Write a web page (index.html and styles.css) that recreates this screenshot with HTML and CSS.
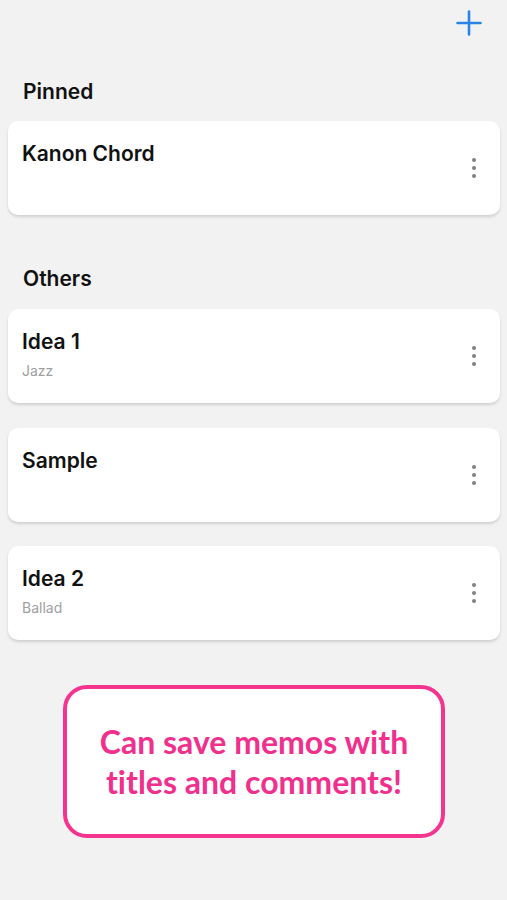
FILE: index.html
```html
<!DOCTYPE html>
<html lang="en">
<head>
    <meta charset="UTF-8">
    <meta name="viewport" content="width=device-width, initial-scale=1.0">
    <title>Chord Memos</title>
    <link rel="stylesheet" href="styles.css">
</head>
<body>
    <div id="app">
        <div class="top-bar">
            <button class="add-button" aria-label="Add memo">
                <svg width="26" height="26" viewBox="0 0 26 26">
                    <path d="M13 1.5v23M1.5 13h23" stroke="#2a84e6" stroke-width="2.6" stroke-linecap="round" fill="none"/>
                </svg>
            </button>
        </div>

        <h3 class="section-title pinned">Pinned</h3>
        <div class="memo-list">
            <div class="memo-card">
                <div class="memo-text">
                    <div class="memo-title">Kanon Chord</div>
                </div>
                <div class="more-dots"><span></span><span></span><span></span></div>
            </div>
        </div>

        <h3 class="section-title others">Others</h3>
        <div class="memo-list">
            <div class="memo-card">
                <div class="memo-text">
                    <div class="memo-title">Idea 1</div>
                    <div class="memo-comment">Jazz</div>
                </div>
                <div class="more-dots"><span></span><span></span><span></span></div>
            </div>
            <div class="memo-card">
                <div class="memo-text">
                    <div class="memo-title">Sample</div>
                </div>
                <div class="more-dots"><span></span><span></span><span></span></div>
            </div>
            <div class="memo-card">
                <div class="memo-text">
                    <div class="memo-title">Idea 2</div>
                    <div class="memo-comment">Ballad</div>
                </div>
                <div class="more-dots"><span></span><span></span><span></span></div>
            </div>
        </div>

        <div class="callout">
            <p>Can save memos with<br>titles and comments!</p>
        </div>
    </div>
</body>
</html>
```

FILE: styles.css
```css
body {
    background-color: #f2f2f2;
    font-family: Inter, "Noto Sans", sans-serif;
    margin: 0;
    padding: 0;
    color: #111111;
}

#app {
    width: 507px;
    height: 900px;
}

.top-bar {
    height: 46px;
    display: flex;
    justify-content: flex-end;
    align-items: center;
    padding-right: 25px;
}

.add-button {
    background: none;
    border: none;
    padding: 0;
    width: 26px;
    height: 26px;
    cursor: pointer;
}

.add-button svg {
    display: block;
}

.section-title {
    margin: 0;
    padding-left: 23px;
    font-size: 21px;
    font-weight: 600;
    line-height: 25px;
    color: #111111;
}

.section-title.pinned {
    margin-top: 33px;
    margin-bottom: 17px;
}

.section-title.others {
    margin-top: 51px;
    margin-bottom: 18px;
}

.memo-list {
    display: flex;
    flex-direction: column;
    gap: 24.5px;
    padding: 0 7px 0 8px;
}

.memo-card {
    height: 94px;
    box-sizing: border-box;
    background-color: #ffffff;
    border-radius: 10px;
    box-shadow: 0 2px 3px rgba(0, 0, 0, 0.14);
    display: flex;
    align-items: center;
    padding: 20px 24px 0 14px;
}

.memo-text {
    flex: 1;
    align-self: flex-start;
}

.memo-title {
    font-size: 21px;
    font-weight: 600;
    line-height: 25px;
}

.memo-comment {
    margin-top: 8px;
    font-size: 14px;
    line-height: 18px;
    color: #a0a0a0;
}

.more-dots {
    display: flex;
    flex-direction: column;
    gap: 4px;
    margin-top: -20px;
}

.more-dots span {
    width: 4px;
    height: 4px;
    border-radius: 50%;
    background-color: #808080;
}

.callout {
    margin: 45px 0 0 63px;
    width: 382px;
    height: 153px;
    box-sizing: border-box;
    border: 4px solid #f4348f;
    border-radius: 24px;
    background-color: #ffffff;
    display: flex;
    align-items: center;
    justify-content: center;
}

.callout p {
    margin: 0;
    text-align: center;
    font-family: Lato, "Open Sans", sans-serif;
    font-weight: 700;
    font-size: 32px;
    line-height: 40px;
    color: #f0308c;
    font-variant-ligatures: none;
}
```
